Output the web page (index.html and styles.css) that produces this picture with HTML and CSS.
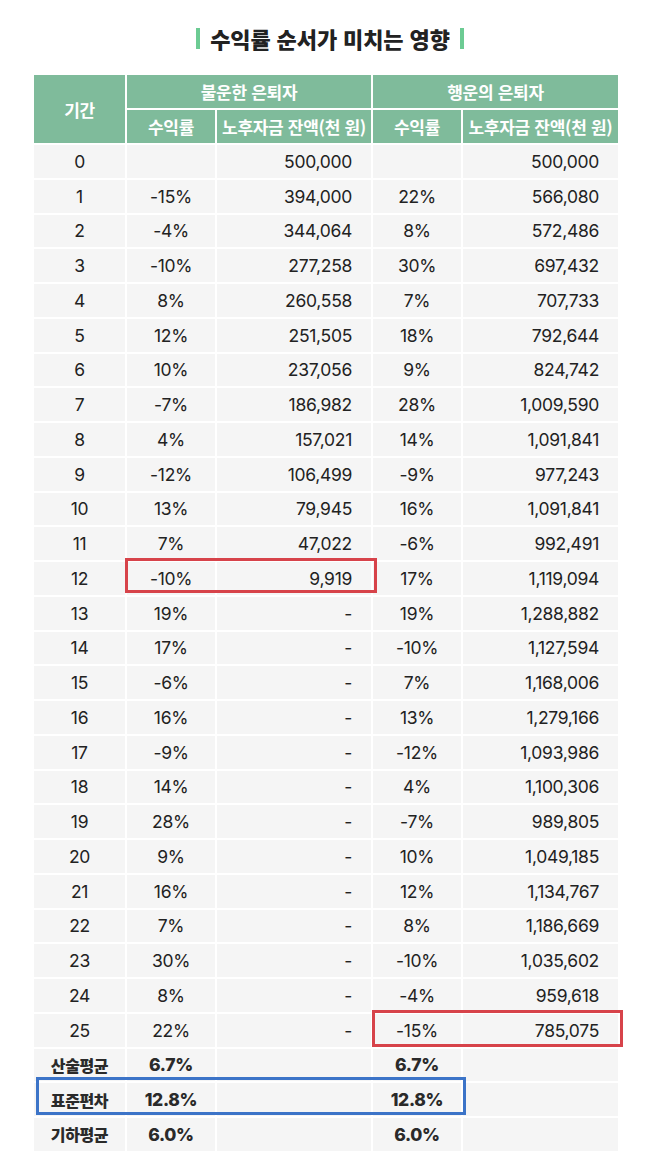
FILE: index.html
```html
<!DOCTYPE html>
<html lang="ko">
<head>
<meta charset="utf-8">
<title>수익률 순서가 미치는 영향</title>
<link rel="stylesheet" href="styles.css">
</head>
<body>
<div class="page">
  <h1 class="title"><span class="bar"></span><span class="title-text">수익률 순서가 미치는 영향</span><span class="bar"></span></h1>
  <div class="table-wrap">
    <table class="grid">
      <colgroup>
        <col class="c-period"><col class="c-rate"><col class="c-bal"><col class="c-rate"><col class="c-bal2">
      </colgroup>
      <thead>
        <tr>
          <th rowspan="2" class="hd-period">기간</th>
          <th colspan="2">불운한 은퇴자</th>
          <th colspan="2">행운의 은퇴자</th>
        </tr>
        <tr>
          <th>수익률</th>
          <th>노후자금 잔액(천 원)</th>
          <th>수익률</th>
          <th>노후자금 잔액(천 원)</th>
        </tr>
      </thead>
      <tbody>
        <tr><td>0</td><td class="pct"></td><td class="num">500,000</td><td class="pct"></td><td class="num">500,000</td></tr>
        <tr><td>1</td><td class="pct">-15%</td><td class="num">394,000</td><td class="pct">22%</td><td class="num">566,080</td></tr>
        <tr><td>2</td><td class="pct">-4%</td><td class="num">344,064</td><td class="pct">8%</td><td class="num">572,486</td></tr>
        <tr><td>3</td><td class="pct">-10%</td><td class="num">277,258</td><td class="pct">30%</td><td class="num">697,432</td></tr>
        <tr><td>4</td><td class="pct">8%</td><td class="num">260,558</td><td class="pct">7%</td><td class="num">707,733</td></tr>
        <tr><td>5</td><td class="pct">12%</td><td class="num">251,505</td><td class="pct">18%</td><td class="num">792,644</td></tr>
        <tr><td>6</td><td class="pct">10%</td><td class="num">237,056</td><td class="pct">9%</td><td class="num">824,742</td></tr>
        <tr><td>7</td><td class="pct">-7%</td><td class="num">186,982</td><td class="pct">28%</td><td class="num">1,009,590</td></tr>
        <tr><td>8</td><td class="pct">4%</td><td class="num">157,021</td><td class="pct">14%</td><td class="num">1,091,841</td></tr>
        <tr><td>9</td><td class="pct">-12%</td><td class="num">106,499</td><td class="pct">-9%</td><td class="num">977,243</td></tr>
        <tr><td>10</td><td class="pct">13%</td><td class="num">79,945</td><td class="pct">16%</td><td class="num">1,091,841</td></tr>
        <tr><td>11</td><td class="pct">7%</td><td class="num">47,022</td><td class="pct">-6%</td><td class="num">992,491</td></tr>
        <tr><td>12</td><td class="pct">-10%</td><td class="num">9,919</td><td class="pct">17%</td><td class="num">1,119,094</td></tr>
        <tr><td>13</td><td class="pct">19%</td><td class="num">-</td><td class="pct">19%</td><td class="num">1,288,882</td></tr>
        <tr><td>14</td><td class="pct">17%</td><td class="num">-</td><td class="pct">-10%</td><td class="num">1,127,594</td></tr>
        <tr><td>15</td><td class="pct">-6%</td><td class="num">-</td><td class="pct">7%</td><td class="num">1,168,006</td></tr>
        <tr><td>16</td><td class="pct">16%</td><td class="num">-</td><td class="pct">13%</td><td class="num">1,279,166</td></tr>
        <tr><td>17</td><td class="pct">-9%</td><td class="num">-</td><td class="pct">-12%</td><td class="num">1,093,986</td></tr>
        <tr><td>18</td><td class="pct">14%</td><td class="num">-</td><td class="pct">4%</td><td class="num">1,100,306</td></tr>
        <tr><td>19</td><td class="pct">28%</td><td class="num">-</td><td class="pct">-7%</td><td class="num">989,805</td></tr>
        <tr><td>20</td><td class="pct">9%</td><td class="num">-</td><td class="pct">10%</td><td class="num">1,049,185</td></tr>
        <tr><td>21</td><td class="pct">16%</td><td class="num">-</td><td class="pct">12%</td><td class="num">1,134,767</td></tr>
        <tr><td>22</td><td class="pct">7%</td><td class="num">-</td><td class="pct">8%</td><td class="num">1,186,669</td></tr>
        <tr><td>23</td><td class="pct">30%</td><td class="num">-</td><td class="pct">-10%</td><td class="num">1,035,602</td></tr>
        <tr><td>24</td><td class="pct">8%</td><td class="num">-</td><td class="pct">-4%</td><td class="num">959,618</td></tr>
        <tr><td>25</td><td class="pct">22%</td><td class="num">-</td><td class="pct">-15%</td><td class="num">785,075</td></tr>
        <tr class="sum"><td class="lbl">산술평균</td><td class="pct">6.7%</td><td></td><td class="pct">6.7%</td><td></td></tr>
        <tr class="sum"><td class="lbl">표준편차</td><td class="pct">12.8%</td><td></td><td class="pct">12.8%</td><td></td></tr>
        <tr class="sum"><td class="lbl">기하평균</td><td class="pct">6.0%</td><td></td><td class="pct">6.0%</td><td></td></tr>
      </tbody>
    </table>
    <div class="mark mark-red mark-unlucky"></div>
    <div class="mark mark-red mark-lucky"></div>
    <div class="mark mark-blue mark-std"></div>
  </div>
</div>
</body>
</html>
```

FILE: styles.css
```css
html, body {
  margin: 0;
  padding: 0;
  background: #ffffff;
}

.page {
  width: 658px;
  padding-top: 25px;
  font-family: "Inter", "Noto Sans CJK KR", sans-serif;
  color: #1e1e1e;
}

.title {
  margin: 0;
  display: flex;
  align-items: center;
  justify-content: center;
  gap: 10px;
  height: 26px;
  font-family: "Noto Sans CJK KR", sans-serif;
  font-weight: 900;
  font-size: 22px;
  letter-spacing: -0.1px;
  color: #222222;
  padding-left: 2px;
}

.title-text {
  line-height: 26px;
}

.bar {
  display: block;
  width: 4px;
  height: 21px;
  background: #6ccb93;
}

.table-wrap {
  position: relative;
  margin: 24px 0 0 34px;
  width: 584px;
}

.grid {
  border-collapse: separate;
  border-spacing: 2px;
  margin: -2px;
  table-layout: fixed;
  width: 588px;
}

.c-period { width: 91px; }
.c-rate { width: 88px; }
.c-bal { width: 154px; }
.c-bal2 { width: 155px; }

.grid th {
  background: #7fbb9b;
  color: #ffffff;
  font-family: "Noto Sans CJK KR", sans-serif;
  font-weight: 700;
  font-size: 17px;
  letter-spacing: -0.3px;
  height: 33px;
  padding: 0;
  text-align: center;
  white-space: nowrap;
}

.grid th.hd-period {
  font-size: 17px;
}

.grid td {
  background: #f5f5f5;
  height: 32.75px;
  padding: 0;
  text-align: center;
  font-size: 17.5px;
  font-weight: 400;
  letter-spacing: -0.3px;
  color: #222222;
}

.grid td.num {
  text-align: right;
  padding-right: 19px;
}

.grid tr.sum td.lbl {
  font-family: "Noto Sans CJK KR", sans-serif;
  font-size: 16px;
  font-weight: 900;
  letter-spacing: -0.4px;
  color: #2a2a2a;
}

.grid tr.sum td.pct {
  font-weight: 800;
  color: #2a2a2a;
}

.mark {
  position: absolute;
  box-sizing: border-box;
  pointer-events: none;
}

.mark-red {
  border: 3px solid #d7434a;
}

.mark-blue {
  border: 3px solid #3c74c8;
}

.mark-unlucky {
  left: 91px;
  top: 485px;
  width: 252px;
  height: 35px;
}

.mark-lucky {
  left: 338px;
  top: 937px;
  width: 251px;
  height: 37px;
}

.mark-std {
  left: 2px;
  top: 1004px;
  width: 430px;
  height: 38px;
}
```
